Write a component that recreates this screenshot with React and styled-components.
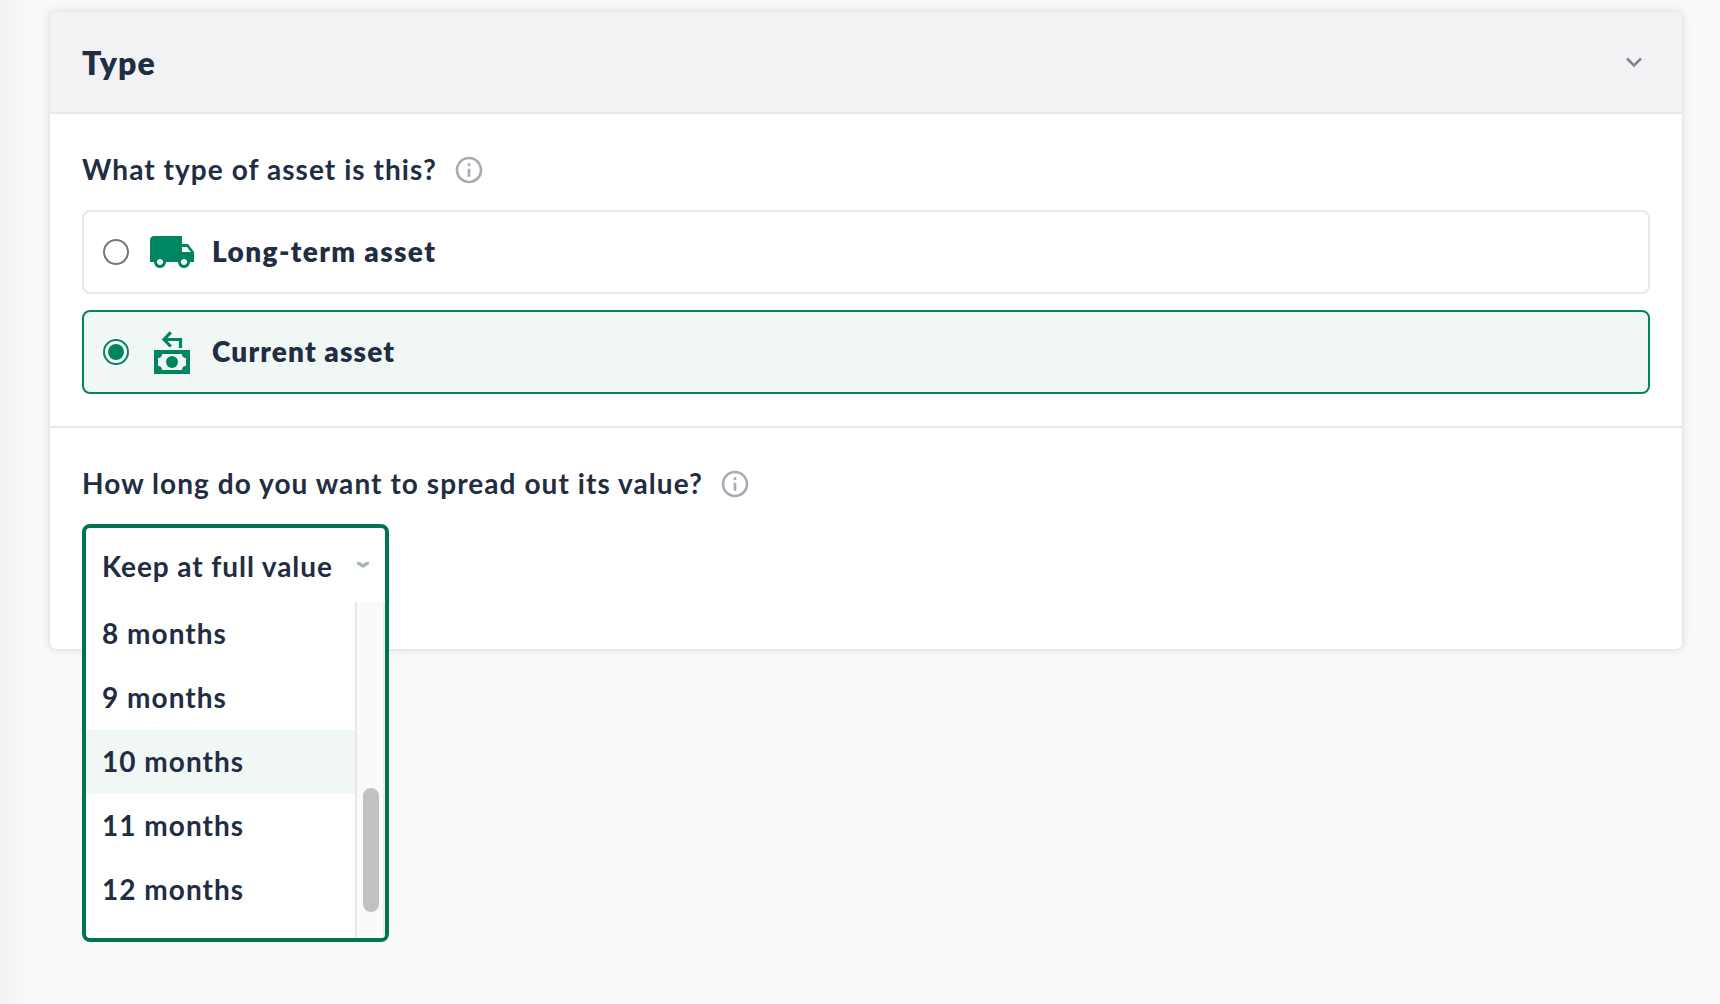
import React, { useState } from "react";
import styled, { createGlobalStyle } from "styled-components";

const GlobalStyle = createGlobalStyle`
  * {
    box-sizing: border-box;
  }
  body {
    margin: 0;
    background: #f8faf9;
    color: #212d42;
    font-family: Lato, "Open Sans", sans-serif;
    font-size: 28px;
    font-weight: 700;
  }
`;

const months = [8, 9, 10, 11, 12];

const InfoIcon = () => (
  <svg width="32" height="32" viewBox="0 0 24 24" fill="#a6abb5">
    <path d="M11 7h2v2h-2zm0 4h2v6h-2zm1-9C6.48 2 2 6.48 2 12s4.48 10 10 10 10-4.48 10-10S17.52 2 12 2zm0 18c-4.41 0-8-3.59-8-8s3.59-8 8-8 8 3.59 8 8-3.59 8-8 8z" />
  </svg>
);

const TruckIcon = () => (
  <svg width="48" height="48" viewBox="0 0 24 24" fill="#008561">
    <path d="M20 8h-3V4H3c-1.1 0-2 .9-2 2v11h2c0 1.66 1.34 3 3 3s3-1.34 3-3h6c0 1.66 1.34 3 3 3s3-1.34 3-3h2v-5l-3-4zM6 18.5c-.83 0-1.5-.67-1.5-1.5s.67-1.5 1.5-1.5 1.5.67 1.5 1.5-.67 1.5-1.5 1.5zm13.5-9l1.96 2.5H17V9.5h2.5zm-1.5 9c-.83 0-1.5-.67-1.5-1.5s.67-1.5 1.5-1.5 1.5.67 1.5 1.5-.67 1.5-1.5 1.5z" />
  </svg>
);

const CashBackIcon = () => (
  <svg width="48" height="48" viewBox="0 0 24 24" fill="#008561">
    <path
      fillRule="evenodd"
      d="M3 11h18v12H3zM7 13a2 2 0 0 1-2 2v4a2 2 0 0 1 2 2h10a2 2 0 0 1 2-2v-4a2 2 0 0 1-2-2z"
    />
    <circle cx="12" cy="17" r="3" />
    <path
      d="M11.4 2.2 8 5.75l3.4 3.5M8.2 5.75h8.05V10"
      fill="none"
      stroke="#008561"
      strokeWidth="1.6"
    />
  </svg>
);

export default function App() {
  const [type, setType] = useState("current");
  const [active, setActive] = useState(10);

  return (
    <>
      <GlobalStyle />
      <Page>
        <Card>
          <CardHeader>
            <Title>Type</Title>
            <HeaderChevron width="16" height="11" viewBox="0 0 16 11">
              <path d="M1 1.5l7 7 7-7" />
            </HeaderChevron>
          </CardHeader>

          <Section>
            <Question>
              <Label $spacing="1.06px">What type of asset is this?</Label>
              <InfoIcon />
            </Question>
            <Options>
              <Option
                $selected={type === "long"}
                onClick={() => setType("long")}
              >
                <Radio $selected={type === "long"} />
                <TruckIcon />
                <OptionLabel $spacing="1.37px">Long-term asset</OptionLabel>
              </Option>
              <Option
                $selected={type === "current"}
                onClick={() => setType("current")}
              >
                <Radio $selected={type === "current"} />
                <CashBackIcon />
                <OptionLabel $spacing="1.13px">Current asset</OptionLabel>
              </Option>
            </Options>
          </Section>

          <Section $last>
            <Question>
              <Label $spacing="1.07px">
                How long do you want to spread out its value?
              </Label>
              <InfoIcon />
            </Question>
            <SelectAnchor>
              <Select>
                <SelectValue>
                  <ValueLabel $spacing="0.92px">Keep at full value</ValueLabel>
                  <svg width="12" height="6" viewBox="0 0 12 6" fill="none">
                    <path
                      d="M0 0.2 6 4l6-3.8"
                      stroke="#a9b6ba"
                      strokeWidth="3.4"
                      strokeLinejoin="round"
                    />
                  </svg>
                </SelectValue>
                <Menu>
                  <MenuList>
                    {months.map((m) => (
                      <MenuItem
                        key={m}
                        $active={m === active}
                        onMouseEnter={() => setActive(m)}
                      >
                        <Label $spacing="1.02px">{m} months</Label>
                      </MenuItem>
                    ))}
                  </MenuList>
                  <ScrollTrack>
                    <ScrollThumb />
                  </ScrollTrack>
                </Menu>
              </Select>
            </SelectAnchor>
          </Section>
        </Card>
      </Page>
    </>
  );
}

const Page = styled.main`
  min-height: 1004px;
  padding: 12px 38px 0 50px;
  background: linear-gradient(to right, #f2f4f3, #f8faf9 32px);
`;

const Card = styled.div`
  height: 637px;
  border-radius: 6px;
  background: #fff;
  box-shadow:
    0 0 0 2px rgba(0, 0, 0, 0.02),
    0 0 8px 2px rgba(0, 0, 0, 0.08);
`;

const CardHeader = styled.header`
  display: flex;
  align-items: center;
  justify-content: space-between;
  height: 102px;
  padding: 2px 40px 0 32px;
  background: #f2f2f4;
  border-bottom: 2px solid #e8e8e8;
  border-radius: 6px 6px 0 0;
`;

const Title = styled.h2`
  margin: 0;
  font-size: 32px;
  font-weight: 800;
  letter-spacing: 1px;
  line-height: 40px;
`;

const HeaderChevron = styled.svg`
  margin-bottom: 2px;
  fill: none;
  stroke: #7b8592;
  stroke-width: 2.5;
`;

const Section = styled.section`
  padding: 40px 32px 32px;
  border-bottom: ${(props) => (props.$last ? "none" : "2px solid #e8e8e8")};
`;

const Question = styled.div`
  display: flex;
  align-items: center;
  gap: 16px;
  height: 32px;
`;

const Label = styled.span`
  padding-bottom: 2px;
  letter-spacing: ${(props) => props.$spacing};
  line-height: 32px;
  white-space: nowrap;
`;

const OptionLabel = styled(Label)`
  margin-left: 16px;
  font-weight: 800;
`;

const ValueLabel = styled(Label)`
  padding: 2px 0 0;
`;

const Options = styled.div`
  display: grid;
  gap: 16px;
  margin-top: 24px;
`;

const Option = styled.div`
  display: flex;
  align-items: center;
  height: 84px;
  padding-left: 19px;
  border: 2px solid ${(props) => (props.$selected ? "#008561" : "#e8e8e8")};
  border-radius: 8px;
  background: ${(props) => (props.$selected ? "#f1f7f5" : "#fff")};
  cursor: pointer;
`;

const Radio = styled.span`
  display: grid;
  place-items: center;
  width: 26px;
  height: 26px;
  margin-right: 19px;
  border: 2px solid ${(props) => (props.$selected ? "#008561" : "#767676")};
  border-radius: 50%;
  background: #fff;

  &::after {
    content: "";
    width: 16px;
    height: 16px;
    border-radius: 50%;
    background: ${(props) => (props.$selected ? "#008561" : "transparent")};
  }
`;

const SelectAnchor = styled.div`
  position: relative;
  height: 82px;
  margin-top: 24px;
`;

/* The open select hangs over the bottom edge of the card */
const Select = styled.div`
  position: absolute;
  top: 0;
  left: 0;
  width: 307px;
  height: 418px;
  border: 4px solid #007355;
  border-radius: 8px;
  background: #fff;
  overflow: hidden;
`;

const SelectValue = styled.div`
  display: flex;
  align-items: center;
  justify-content: space-between;
  height: 74px;
  padding: 0 16px;
`;

const Menu = styled.div`
  display: flex;
  height: 336px;
`;

const MenuList = styled.div`
  flex: 1;
`;

const MenuItem = styled.div`
  display: flex;
  align-items: center;
  height: 64px;
  padding: 0 16px;
  background: ${(props) => (props.$active ? "#f1f7f5" : "#fff")};
`;

const ScrollTrack = styled.div`
  width: 30px;
  padding: 186px 4px 0 6px;
  background: #fafafa;
  border-left: 2px solid #e8e8e8;
  border-right: 2px solid #ededed;
`;

const ScrollThumb = styled.div`
  width: 16px;
  height: 124px;
  border-radius: 8px;
  background: #c1c1c1;
`;
